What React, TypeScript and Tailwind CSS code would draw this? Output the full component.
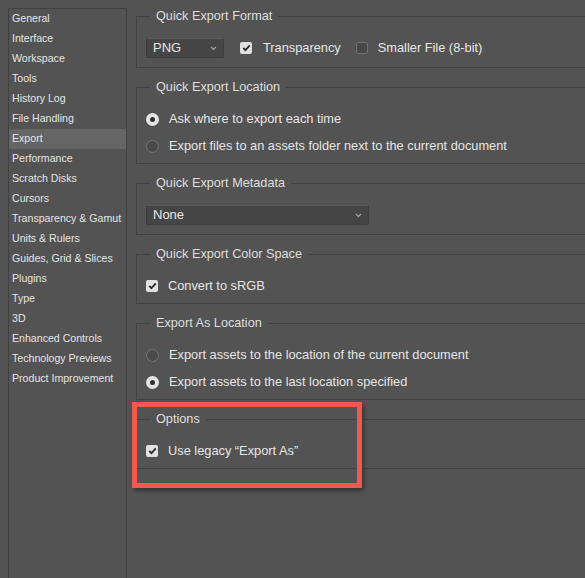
import React from "react";

const font = { fontFamily: '"Liberation Sans", Arial, sans-serif' };

const navItems = [
  "General",
  "Interface",
  "Workspace",
  "Tools",
  "History Log",
  "File Handling",
  "Export",
  "Performance",
  "Scratch Disks",
  "Cursors",
  "Transparency & Gamut",
  "Units & Rulers",
  "Guides, Grid & Slices",
  "Plugins",
  "Type",
  "3D",
  "Enhanced Controls",
  "Technology Previews",
  "Product Improvement",
];

const Chevron = () => (
  <svg width="7" height="5" viewBox="0 0 7 5" className="text-[#a8a8a8]">
    <polyline points="1,1 3.5,3.5 6,1" fill="none" stroke="currentColor" strokeWidth="1.1" />
  </svg>
);

const Select = ({ value, width }: { value: string; width: string }) => (
  <div
    className={
      width +
      " flex h-5 items-center justify-between rounded-[2px] border border-[#3d3d3d] border-t-[#5a5a5a] bg-[#454545] pl-[6px] pr-[6px] text-[13px] text-[#e6e6e6]"
    }
  >
    <span>{value}</span>
    <Chevron />
  </div>
);

const Checkbox = ({ checked }: { checked: boolean }) =>
  checked ? (
    <span className="flex h-3 w-3 shrink-0 items-center justify-center rounded-[2px] bg-[#e2e2e2]">
      <svg width="9" height="8" viewBox="0 0 9 8">
        <polyline points="1.3,4 3.5,6.2 7.8,1.3" fill="none" stroke="#2e2e2e" strokeWidth="1.8" />
      </svg>
    </span>
  ) : (
    <span className="block h-3 w-3 shrink-0 rounded-[2px] border border-[#707070] bg-[#474747]" />
  );

const Radio = ({ checked }: { checked: boolean }) =>
  checked ? (
    <span className="flex h-[13px] w-[13px] shrink-0 items-center justify-center rounded-full bg-[#e4e4e4]">
      <span className="h-[5px] w-[5px] rounded-full bg-[#2f2f2f]" />
    </span>
  ) : (
    <span className="block h-[13px] w-[13px] shrink-0 rounded-full border border-[#757575] bg-[#4a4a4a]" />
  );

const Group = ({
  title,
  height,
  children,
}: {
  title: string;
  height: string;
  children: React.ReactNode;
}) => (
  <div className={height + " relative border border-r-0 border-[#424242] pl-[9px] pt-[21px]"}>
    <span className="absolute left-[13px] top-[-9px] bg-[#535353] px-[6px] text-[12.7px] leading-4 text-[#dedede]">
      {title}
    </span>
    {children}
  </div>
);

export default function App() {
  return (
    <div
      className="flex h-screen overflow-hidden bg-[#535353] pt-[7px] text-[12.8px] text-[#e6e6e6]"
      style={font}
    >
      {/* sidebar */}
      <div className="ml-2 mt-px h-[600px] w-[119px] shrink-0 border border-b-0 border-[#414141]">
        {navItems.map((item) => (
          <div
            key={item}
            className={
              (item === "Export" ? "bg-[#656565] " : "") +
              "flex h-5 items-center whitespace-nowrap pl-[3px] text-[10.6px] text-[#e4e4e4]"
            }
          >
            {item}
          </div>
        ))}
      </div>

      {/* main */}
      <div className="relative ml-[9px] flex flex-1 flex-col gap-[19px] pt-[9px]">
        <Group title="Quick Export Format" height="h-[52px]">
          <div className="flex items-center whitespace-nowrap">
            <Select value="PNG" width="w-[78px]" />
            <span className="ml-4 mr-[11px]">
              <Checkbox checked />
            </span>
            <span>Transparency</span>
            <span className="ml-[15px] mr-[10px]">
              <Checkbox checked={false} />
            </span>
            <span>Smaller File (8-bit)</span>
          </div>
        </Group>

        <Group title="Quick Export Location" height="h-[77px]">
          <div className="flex flex-col gap-[7px] whitespace-nowrap">
            <div className="flex h-5 items-center gap-[10px]">
              <Radio checked />
              <span>Ask where to export each time</span>
            </div>
            <div className="flex h-5 items-center gap-[10px]">
              <Radio checked={false} />
              <span>Export files to an assets folder next to the current document</span>
            </div>
          </div>
        </Group>

        <Group title="Quick Export Metadata" height="h-[52px]">
          <Select value="None" width="w-[223px]" />
        </Group>

        <Group title="Quick Export Color Space" height="h-[50px]">
          <div className="flex h-5 items-center gap-[10px]">
            <Checkbox checked />
            <span>Convert to sRGB</span>
          </div>
        </Group>

        <Group title="Export As Location" height="h-[77px]">
          <div className="flex flex-col gap-[7px] whitespace-nowrap">
            <div className="flex h-5 items-center gap-[10px]">
              <Radio checked={false} />
              <span>Export assets to the location of the current document</span>
            </div>
            <div className="flex h-5 items-center gap-[10px]">
              <Radio checked />
              <span>Export assets to the last location specified</span>
            </div>
          </div>
        </Group>

        <Group title="Options" height="h-[50px]">
          <div className="flex h-5 items-center gap-[10px]">
            <Checkbox checked />
            <span>Use legacy “Export As”</span>
          </div>
        </Group>

        {/* annotation highlight */}
        <div className="absolute left-[-4px] top-[395px] h-[86px] w-[230px] border-[5px] border-[#ee5a4f] shadow-[2px_3px_4px_rgba(0,0,0,0.35)]" />
      </div>
    </div>
  );
}
